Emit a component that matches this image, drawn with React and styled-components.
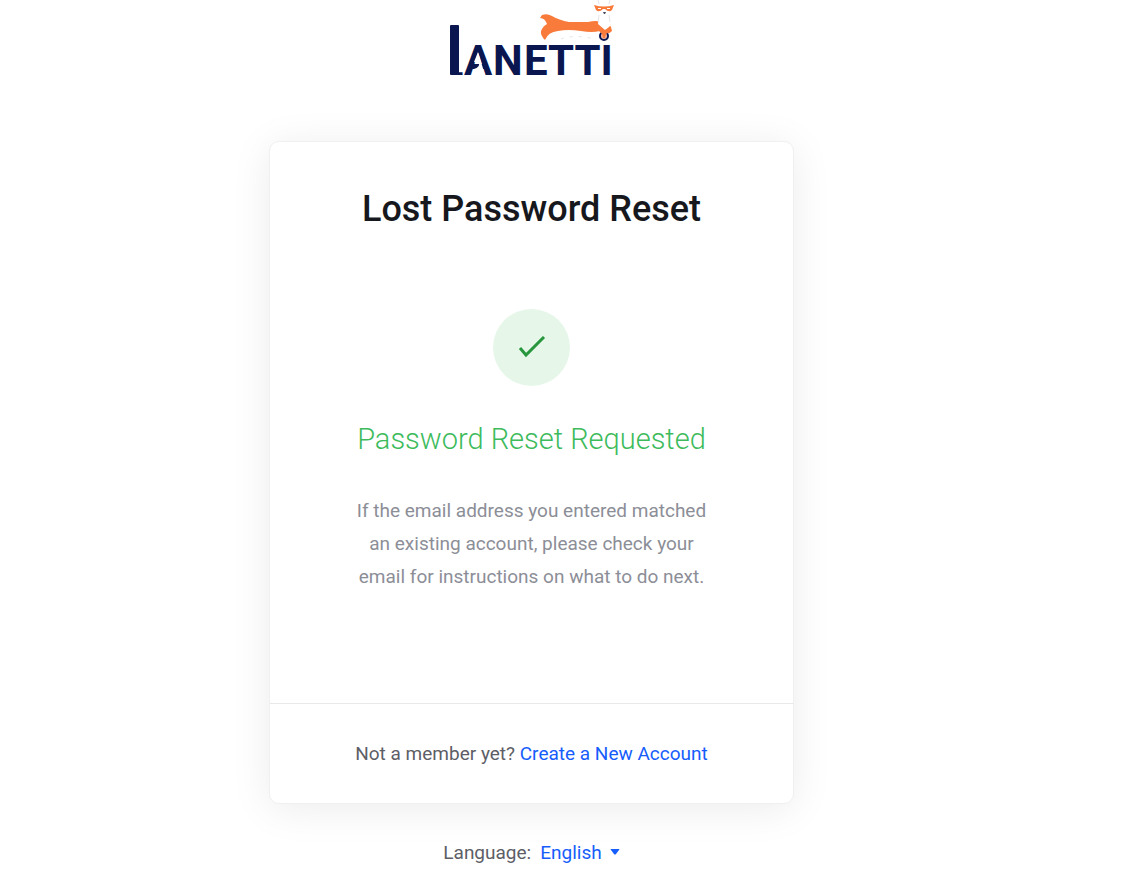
import styled, { createGlobalStyle } from "styled-components";
import React from "react";

const GlobalStyle = createGlobalStyle`
  * {
    box-sizing: border-box;
  }
  body {
    margin: 0;
    background: #fff;
    color: #5d5e66;
    font-family: Roboto, "Liberation Sans", sans-serif;
    font-size: 19px;
    line-height: 33px;
  }
`;

const Page = styled.main`
  display: flex;
  flex-direction: column;
  align-items: center;
  padding: 0 78px 20px 0;
`;

const LogoLink = styled.a`
  display: block;
  height: 90px;
  margin-bottom: 51px;
`;

const LogoWord = styled.text`
  fill: #0a1650;
  font-family: Roboto, "Liberation Sans", sans-serif;
  font-weight: 700;
  font-size: ${(props) => (props.$small ? 24 : 42)}px;
`;

const Card = styled.section`
  width: 100%;
  max-width: 525px;
  border: 1px solid #f0f0f0;
  border-radius: 10px;
  background: #fff;
  box-shadow: 0 5px 40px rgba(0, 0, 0, 0.08);
  text-align: center;
`;

const CardBody = styled.div`
  display: flex;
  flex-direction: column;
  align-items: center;
  padding: 45px 76px 110px;
`;

const Title = styled.h1`
  margin: 0;
  color: #16181d;
  font-size: 36px;
  font-weight: 500;
  line-height: 44px;
`;

const StatusIcon = styled.div`
  display: flex;
  align-items: center;
  justify-content: center;
  width: 77px;
  height: 77px;
  margin-top: 78px;
  border-radius: 50%;
  background: #e6f7ea;
`;

const StatusTitle = styled.h2`
  margin: 35px 0 37px;
  color: #3dbb5c;
  font-size: 29px;
  font-weight: 300;
  line-height: 36px;
`;

const Message = styled.p`
  max-width: 370px;
  margin: 0;
  color: #8c8e97;
`;

const CardFooter = styled.div`
  padding: 33px 20px;
  border-top: 1px solid #e9e9ec;
`;

const Link = styled.a`
  color: #165dfc;
  text-decoration: none;
`;

const LanguageBar = styled.div`
  display: flex;
  align-items: center;
  margin-top: 32px;
`;

const LanguageSelect = styled.select`
  field-sizing: content;
  appearance: none;
  margin: 0 8px 0 9px;
  padding: 0;
  border: 0;
  background: none;
  color: #165dfc;
  font: inherit;
  cursor: pointer;
`;

const Logo = () => (
  <svg width="166" height="90" viewBox="0 0 166 90" role="img" aria-label="Lanetti">
    <rect x="1" y="25" width="9" height="50" rx="1" fill="#0a1650" />
    <LogoWord $small x="1" y="75">L</LogoWord>
    <LogoWord x="15" y="75">A</LogoWord>
    <LogoWord x="44" y="75">N</LogoWord>
    <LogoWord x="75" y="75">ETTI</LogoWord>
    <path fill="#fff" d="M29 52 L36 75 H24 L25 69 Q31 67 30 63 L25 62 Z" />
    {/* cape */}
    <path
      fill="#f97b3c"
      d="M93 15 Q98 13 103 16 Q110 20 120 22 H139 Q147 20 155 22 L161 23 L163 31 Q158 36 151 31 Q143 33 132 31 Q119 29 109 31 Q99 32 96 40 Q91 35 92 31 Q94 26 98 24 Q96 18 91 18 Z"
    />
    {/* llama head and mask */}
    <path fill="#fff" d="M149 6 L148 0 L151 3 H160 L162 0 V8 L160 15 L162 26 L156 30 L149 24 L150 15 Z" />
    <path fill="none" stroke="#e5e5e8" d="M150 4 L149 0 M160 4 L161 0 M150 15 L149 22 M160 15 L161 22" />
    <path fill="#f97b3c" d="M145 5 Q155 8 165 5 L163 10 Q160 13 156 9 H154 Q150 13 147 10 Z" />
    <path fill="#fff" d="M149 8 h3 v1 h-3 Z M158 8 h3 v1 h-3 Z" />
    <path fill="#45455b" d="M154 12 h3 l-1 2 h-1 Z" />
    <circle cx="155" cy="36" r="4" fill="#f4b79f" stroke="#0a1650" strokeWidth="2" />
    <path fill="#f97b3c" d="M149 30 Q155 33 161 26 L162 30 Q159 33 157 34 L156 38 H154 L153 34 Z" />
    <path fill="none" stroke="#e5e5e8" strokeDasharray="3 6" d="M112 39 Q127 34 145 39" />
  </svg>
);

const CheckIcon = () => (
  <svg width="28" height="24" viewBox="0 0 28 24" aria-hidden="true">
    <path fill="none" stroke="#27963c" strokeWidth="3" d="M2 12 L8 19 L26 1" />
  </svg>
);

const Caret = () => (
  <svg width="10" height="8" viewBox="0 0 10 8" aria-hidden="true">
    <path fill="#165dfc" d="M1 0 H9 Q10 0 9 1 L6 5 Q5 6 4 5 L1 1 Q0 0 1 0 Z" />
  </svg>
);

const App = () => {
  const languages = ["English"];

  return (
    <>
      <GlobalStyle />
      <Page>
        <LogoLink href="#home">
          <Logo />
        </LogoLink>
        <Card>
          <CardBody>
            <Title>Lost Password Reset</Title>
            <StatusIcon>
              <CheckIcon />
            </StatusIcon>
            <StatusTitle>Password Reset Requested</StatusTitle>
            <Message>
              If the email address you entered matched an existing account,
              please check your email for instructions on what to do next.
            </Message>
          </CardBody>
          <CardFooter>
            Not a member yet? <Link href="#register">Create a New Account</Link>
          </CardFooter>
        </Card>
        <LanguageBar>
          <label htmlFor="language">Language:</label>
          <LanguageSelect id="language">
            {languages.map((language) => (
              <option key={language}>{language}</option>
            ))}
          </LanguageSelect>
          <Caret />
        </LanguageBar>
      </Page>
    </>
  );
};

export default App;
